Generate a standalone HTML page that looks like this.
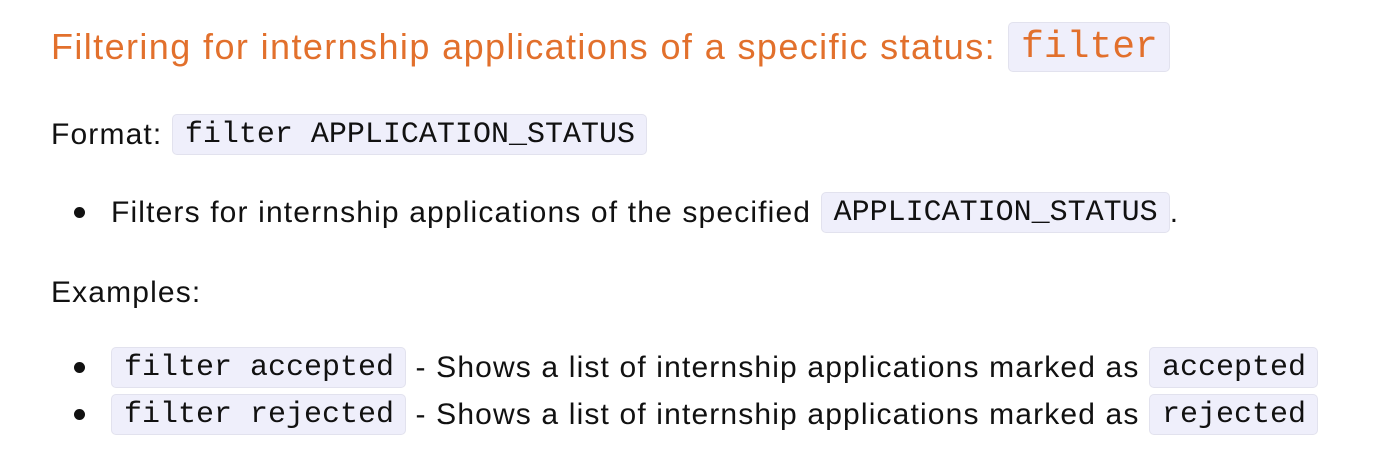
<!DOCTYPE html>
<html><head><meta charset="utf-8"><style>
body{margin:0;width:1382px;height:476px;background:#fff;position:relative;font-family:"Liberation Sans",sans-serif;color:#111;overflow:hidden}
.l{position:absolute;white-space:nowrap;display:flex;align-items:center}
code{font-family:"Liberation Mono",monospace;background:#efeffb;border:1px solid #e2e2ee;border-radius:5px;padding:2px 11px 0 12px;display:inline-block;letter-spacing:0}
.t{font-size:30px;letter-spacing:1.15px}
.t code{font-size:30px;line-height:37px}
h1{margin:0;font-weight:normal;font-size:36px;letter-spacing:1.4px;color:#e2702c;display:flex;align-items:center}
h1 code{font-size:38px;line-height:46px;color:#e2702c;margin-left:12px}
.b{display:inline-block;width:11px;height:11px;border-radius:50%;background:#111;margin-right:26px}
</style></head><body>
<div class="l" style="left:51px;top:22px;height:50px"><h1>Filtering for internship applications of a specific status:<code>filter</code></h1></div>
<div class="l t" style="left:51px;top:114px;height:41px">Format:&nbsp;<code>filter APPLICATION_STATUS</code></div>
<div class="l t" style="left:74px;top:192px;height:41px"><span class="b"></span>Filters for internship applications of the specified&nbsp;<code>APPLICATION_STATUS</code>.</div>
<div class="l t" style="left:51px;top:272px;height:41px">Examples:</div>
<div class="l t" style="left:74px;top:347px;height:41px"><span class="b"></span><code>filter accepted</code>&nbsp;- Shows a list of internship applications marked as&nbsp;<code>accepted</code></div>
<div class="l t" style="left:74px;top:394px;height:41px"><span class="b"></span><code>filter rejected</code>&nbsp;- Shows a list of internship applications marked as&nbsp;<code>rejected</code></div>
</body></html>
